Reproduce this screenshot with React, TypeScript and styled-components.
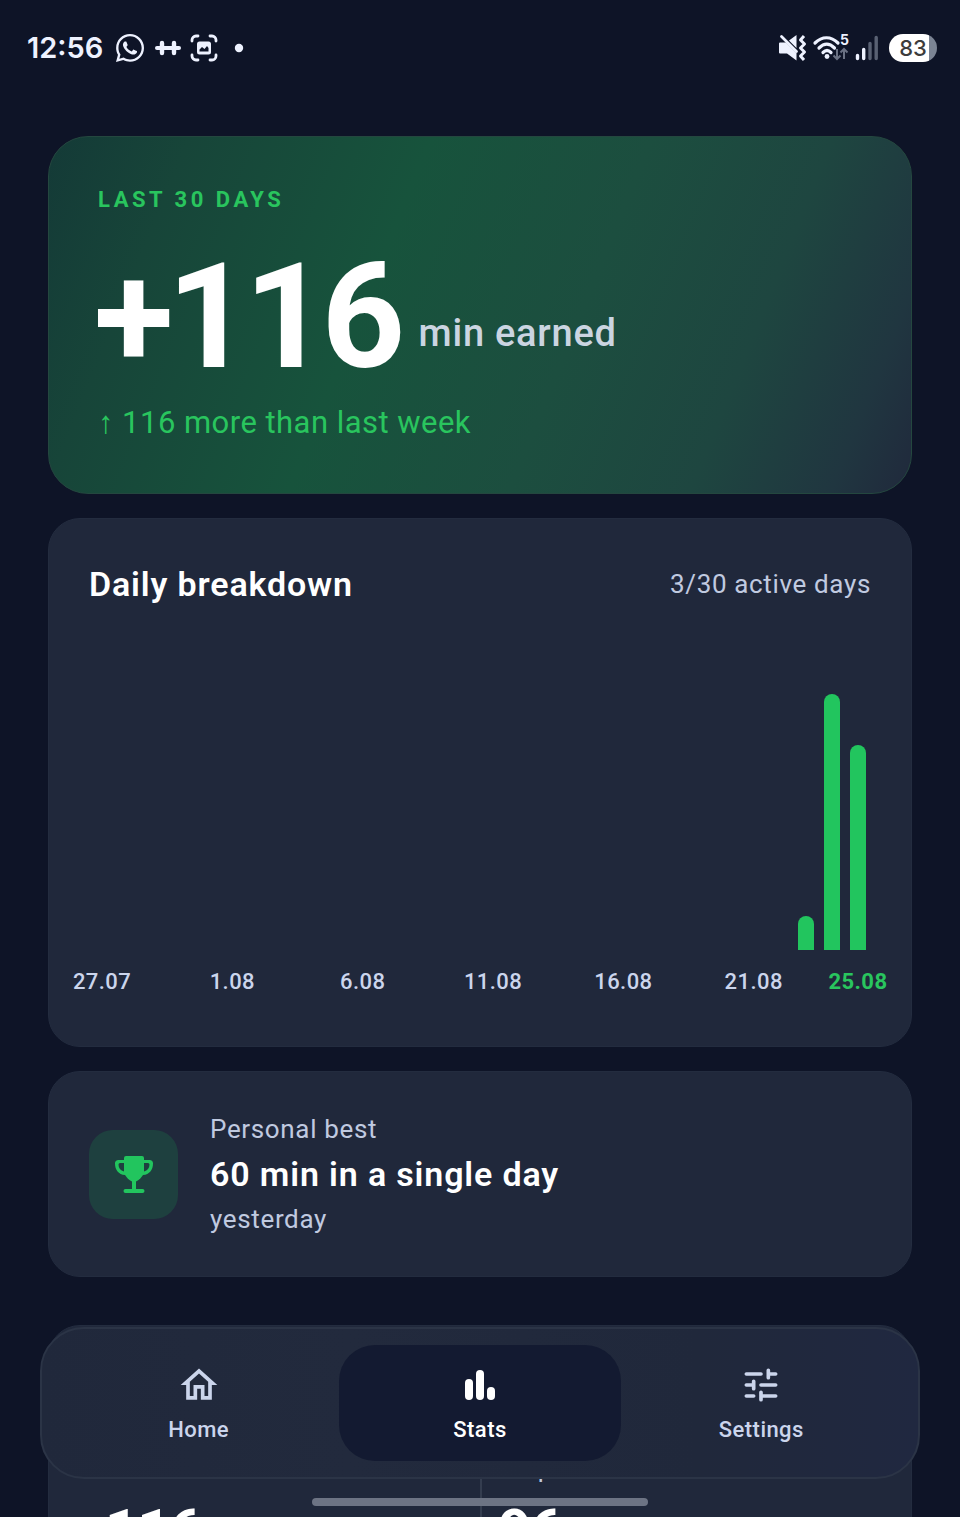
import React from "react";
import styled, { createGlobalStyle } from "styled-components";
import { MdOutlineHome } from "react-icons/md";
import { FaWhatsapp } from "react-icons/fa";

const Global = createGlobalStyle`
  * { box-sizing: border-box; }
  html, body, #root { height: 100%; }
  body { margin: 0; background: #0e1427; font-family: Roboto, sans-serif; color: #fff; }
`;
const Screen = styled.div`
  height: 100vh; overflow: hidden; display: flex; flex-direction: column; position: relative;
`;
const StatusBar = styled.header`
  height: 96px; flex: none; display: flex; align-items: center; justify-content: space-between;
  padding: 0 23px 0 27px; color: #eef2ff;
`;
const StatusGroup = styled.div<{ $gap: number }>`
  display: flex; align-items: center; gap: ${(p) => p.$gap}px;
  svg { display: block; overflow: visible; }
`;
const Clock = styled.time`
  font: 600 29px/36px Inter, sans-serif; width: 78px; white-space: nowrap;
`;
const Battery = styled.span`
  width: 48px; height: 28px; border-radius: 14px; margin-left: 4px;
  background: linear-gradient(90deg, #fff 83%, #7b8494 83%);
  color: #3c3c3c; font: 500 22px/28px Inter, sans-serif; text-align: center;
`;
const Content = styled.main`
  padding: 40px 48px 0; display: flex; flex-direction: column; gap: 24px;
`;
const Card = styled.section`
  flex: none; background: #20283b; border: 1px solid #232c3f; border-radius: 32px;
`;
const Hero = styled(Card)`
  height: 358px; padding: 48px 45px; border-radius: 40px; border-color: #24473f;
  background: linear-gradient(112deg, #143a37 0%, #174539 14%, #17533c 38%, #1c4e3f 60%, #1e4640 78%, #203640 92%, #20293c 100%);
`;
const Eyebrow = styled.h2`
  margin: 0; padding-left: 4px; font-size: 22px; line-height: 30px; font-weight: 700; letter-spacing: 0.16em; color: #29c55e;
`;
const Total = styled.p`
  margin: 23px 0 0; display: flex; align-items: flex-end; line-height: 160px;
`;
const TotalValue = styled.strong`
  font-size: 146px; font-weight: 700; letter-spacing: -0.045em;
`;
const TotalUnit = styled.span`
  font-size: 38px; font-weight: 500; line-height: 44px; letter-spacing: 0.02em; color: #cbd5e1; margin: 0 0 43px 20px;
`;
const Trend = styled.p`
  margin: 5px 0 0; padding-left: 4px; font-size: 31px; line-height: 40px; letter-spacing: 0.015em; color: #29c55e;
`;
const ChartCard = styled(Card)`
  height: 529px; padding: 40px 24px 0;
`;
const CardHead = styled.div`
  display: flex; justify-content: space-between; align-items: center; padding: 0 16px; height: 50px;
`;
const Title = styled.h3`
  margin: 0; font-size: 34px; line-height: 40px; font-weight: 600; letter-spacing: 0.025em;
`;
const Muted = styled.p`
  margin: 0; font-size: 26px; line-height: 32px; letter-spacing: 0.025em; color: #c0cae0;
`;
const Plot = styled.div`
  height: 256px; margin: 85px 16px 0; display: grid; grid-template-columns: repeat(30, 1fr); align-items: end; justify-items: center;
`;
const Bar = styled.div<{ $minutes: number }>`
  width: 16px; height: ${(p) => (p.$minutes / 60) * 100}%; border-radius: 8px 8px 0 0; background: #22c55e;
`;
const Axis = styled.div`
  margin: 16px 16px 0; display: grid; grid-template-columns: repeat(30, 1fr); font-size: 22px; line-height: 32px;
`;
const Tick = styled.span<{ $day: number; $active?: boolean }>`
  grid-row: 1; grid-column: ${(p) => p.$day}; justify-self: center; width: 0; display: flex; justify-content: center;
  letter-spacing: 0.02em; font-weight: ${(p) => (p.$active ? 700 : 500)}; color: ${(p) => (p.$active ? "#29c55e" : "#cbd5ec")};
`;
const BestCard = styled(Card)`
  height: 206px; padding: 0 40px; display: flex; align-items: center; gap: 32px;
`;
const Badge = styled.div`
  width: 89px; height: 89px; border-radius: 24px; background: #1e403f; display: grid; place-items: center; color: #22c55e;
`;
const BestText = styled.div`
  display: flex; flex-direction: column; gap: 9px;
`;
const SplitCard = styled(Card)`
  height: 320px; margin-top: 24px; display: grid; grid-template-columns: 1fr 1fr; padding-top: 122px;
`;
const Stat = styled.div`
  display: flex; flex-direction: column; align-items: flex-start; padding: 0 0 0 56px;
  & + & { border-left: 2px solid #343d4f; padding-left: 16px; }
`;
const StatLabel = styled.span`
  font-size: 26px; line-height: 40px; letter-spacing: 0.025em; color: #c0cae0;
`;
const StatValue = styled.strong`
  font-size: 58px; line-height: 64px; font-weight: 700; margin-top: 10px; letter-spacing: -1px;
`;
const Nav = styled.nav`
  position: absolute; left: 40px; right: 40px; bottom: 38px; height: 152px; border-radius: 44px;
  border: 2px solid #2b3446; background: linear-gradient(90deg, #20283b, #222a3d 35%, #20283b 75%, #202840);
  padding: 16px; display: grid; grid-template-columns: repeat(3, 1fr);
`;
const NavButton = styled.button<{ $active?: boolean }>`
  appearance: none; border: 0; border-radius: 36px; padding: 2px 0 0; background: ${(p) => (p.$active ? "#131a31" : "transparent")};
  color: ${(p) => (p.$active ? "#fff" : "#cbd5ec")}; font: 500 22px/32px Roboto, sans-serif; letter-spacing: 0.02em;
  display: flex; flex-direction: column; align-items: center; justify-content: center; gap: 7px;
`;
const HomeIndicator = styled.div`
  position: absolute; bottom: 11px; left: 0; right: 0; margin: 0 auto; width: 35%; height: 8px; border-radius: 4px; background: #6d7484;
`;

const minutes = [...Array(27).fill(0), 8, 60, 48];
const ticks = [
  { day: 1, label: "27.07" }, { day: 6, label: "1.08" }, { day: 11, label: "6.08" }, { day: 16, label: "11.08" },
  { day: 21, label: "16.08" }, { day: 26, label: "21.08" }, { day: 30, label: "25.08", active: true },
];

const Dumbbell = () => (
  <svg width="26" height="18" viewBox="0 0 26 18" fill="none" stroke="currentColor" strokeLinecap="round">
    <path d="M2 9h22" strokeWidth="4" />
    <path d="M7 4v10M19 4v10" strokeWidth="4.400" />
  </svg>
);
const Capture = () => (
  <svg width="28" height="28" viewBox="0 0 28 28" fill="none">
    <path d="M2 7V6a4 4 0 0 1 4-4h2M20 2h2a4 4 0 0 1 4 4v1M26 21v1a4 4 0 0 1-4 4h-2M8 26H6a4 4 0 0 1-4-4v-1" stroke="currentColor" strokeWidth="2.8" strokeLinecap="round" />
    <rect x="7" y="7.500" width="14" height="13" rx="2.500" fill="currentColor" />
    <path d="M9.500 17.500v-2l2.500-2.500 2.500 2 2.500-3 1.500 2v3.500z" fill="#0e1427" />
  </svg>
);
const SoundOff = () => (
  <svg width="28" height="28" viewBox="0 0 28 28" fill="none">
    <path d="M1 8.500h6L17.500 19v7.500L8 19.500H1a1 1 0 0 1-1-1v-9a1 1 0 0 1 1-1zM10 6.500L17.500 1v13z" fill="currentColor" />
    <path d="M2.500 2.500L17.500 17.500" stroke="currentColor" strokeWidth="2.800" strokeLinecap="round" />
    <path d="M25 2l-3.500 4 4 4-4 4 4 4-4 4 3.500 4" stroke="currentColor" strokeWidth="3" strokeLinejoin="round" />
  </svg>
);
const Wifi = () => (
  <svg width="36" height="28" viewBox="0 0 36 28" fill="none">
    <path d="M2 9C9 2 18 2 25 9M6 14c5-5 10.500-5 15.500 0M10 18.500c2.500-2.500 5.500-2.500 8 0" stroke="currentColor" strokeWidth="3.200" strokeLinecap="round" />
    <circle cx="14" cy="22.500" r="2.400" fill="currentColor" />
    <path d="M24 15v10M20.500 21.500L24 25l3.500-3.500M31 25V15M27.500 18.500L31 15l3.500 3.500" stroke="#6a7183" strokeWidth="2" />
    <text x="27" y="11" fill="currentColor" fontFamily="Inter, sans-serif" fontWeight="700" fontSize="14">5</text>
  </svg>
);
const Signal = () => (
  <svg width="24" height="26" viewBox="0 0 24 26" fill="none" strokeWidth="3.400" strokeLinecap="round">
    <path d="M2.500 20.500v3M8.700 14.500v9" stroke="currentColor" />
    <path d="M15 8.500v15M21.200 2.500v21" stroke="#596173" />
  </svg>
);
const Trophy = () => (
  <svg width="38" height="38" viewBox="0 0 38 38" fill="none">
    <path d="M11 1h16q2 0 2 2v2h5.500q3.500 0 3.500 3.500c0 6.500-3.500 11-10 11.500-1.500 2.500-4 5-7 6.500V34h6.500a2 2 0 0 1 0 4h-17a2 2 0 0 1 0-4H17v-7.500c-3-1.500-5.500-4-7-6.500C3.500 19.500 0 15 0 8.500 0 5 3.500 5 3.500 5H9V3q0-2 2-2zM9 8H5Q3.500 8 3.500 9.500c0 3.500 2 6 5.500 7zM29 8v8.500c3.500-1 5.500-3.500 5.500-7Q34.500 8 33 8z" fill="currentColor" fillRule="evenodd" />
  </svg>
);
const Bars = () => (
  <svg width="44" height="44" viewBox="0 0 44 44" fill="currentColor">
    <rect x="7" y="16" width="8" height="21" rx="4" />
    <rect x="18" y="7" width="8" height="30" rx="4" />
    <rect x="29" y="24" width="8" height="13" rx="4" />
  </svg>
);
const Sliders = () => (
  <svg width="44" height="44" viewBox="0 0 24 24" fill="none" stroke="currentColor" strokeWidth="2" strokeLinecap="round">
    <path d="M4 6h8M16 4v4M16 6h4M4 12h4M8 10v4M12 12h8M4 18h4M12 16v4M12 18h8" />
  </svg>
);

export default function App() {
  return (
    <Screen>
      <Global />
      <StatusBar>
        <StatusGroup $gap={9}>
          <Clock>12:56</Clock>
          <FaWhatsapp size={32} />
          <Dumbbell />
          <Capture />
          <svg width="24" height="10" viewBox="0 0 24 10"><circle cx="12" cy="5" r="4.200" fill="currentColor" /></svg>
        </StatusGroup>
        <StatusGroup $gap={6}>
          <SoundOff />
          <Wifi />
          <Signal />
          <Battery>83</Battery>
        </StatusGroup>
      </StatusBar>
      <Content>
        <Hero>
          <Eyebrow>LAST 30 DAYS</Eyebrow>
          <Total>
            <TotalValue>+116</TotalValue>
            <TotalUnit>min earned</TotalUnit>
          </Total>
          <Trend>↑ 116 more than last week</Trend>
        </Hero>
        <ChartCard>
          <CardHead>
            <Title>Daily breakdown</Title>
            <Muted>3/30 active days</Muted>
          </CardHead>
          <Plot>
            {minutes.map((m, i) => <Bar key={i} $minutes={m} />)}
          </Plot>
          <Axis>
            {ticks.map((t) => <Tick key={t.label} $day={t.day} $active={t.active}>{t.label}</Tick>)}
          </Axis>
        </ChartCard>
        <BestCard>
          <Badge><Trophy /></Badge>
          <BestText>
            <Muted>Personal best</Muted>
            <Title>60 min in a single day</Title>
            <Muted>yesterday</Muted>
          </BestText>
        </BestCard>
        <SplitCard>
          <Stat>
            <StatLabel>Total</StatLabel>
            <StatValue>116</StatValue>
          </Stat>
          <Stat>
            <StatLabel>Steps</StatLabel>
            <StatValue>96</StatValue>
          </Stat>
        </SplitCard>
      </Content>
      <Nav>
        <NavButton><MdOutlineHome size={44} />Home</NavButton>
        <NavButton $active aria-current="page"><Bars />Stats</NavButton>
        <NavButton><Sliders />Settings</NavButton>
      </Nav>
      <HomeIndicator />
    </Screen>
  );
}
